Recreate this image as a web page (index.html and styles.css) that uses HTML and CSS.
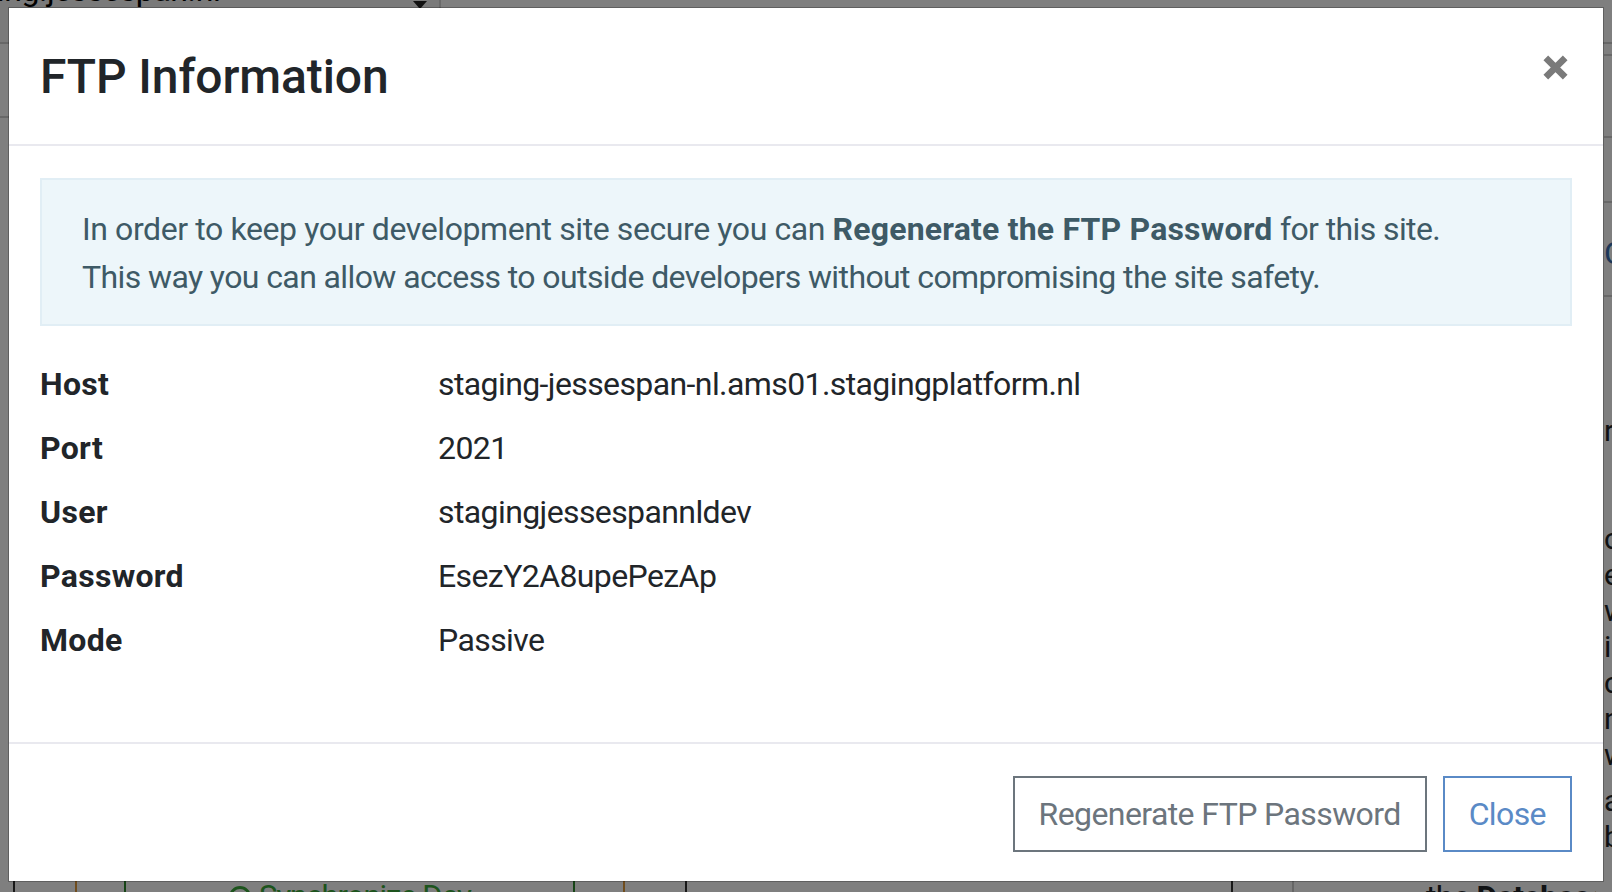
FILE: index.html
```html
<!DOCTYPE html>
<html lang="en">
<head>
<meta charset="utf-8">
<title>FTP Information</title>
<link rel="stylesheet" href="styles.css">
</head>
<body>
<div class="page">
  <div class="topbar">
    <div class="site-select"><span class="site-name">staging.jessespan.nl</span><span class="caret"></span></div>
    <div class="topbar-rest"></div>
  </div>
  <div class="page-main">
    <div class="page-left">
      <div class="left-top"></div>
      <div class="left-mid"></div>
      <div class="action-row">
        <div class="cell cell-a"></div>
        <div class="cell cell-b"></div>
        <div class="cell cell-c"><span class="sync"><span class="sync-icon"></span>Synchronize Dev</span></div>
        <div class="cell cell-d"></div>
        <div class="cell cell-e"></div>
        <div class="cell cell-f"></div>
        <div class="cell cell-g"></div>
        <div class="cell cell-h"><span class="db-text">the <b>Database</b> bu</span></div>
      </div>
    </div>
    <div class="page-right">
      <div class="pr-block pr-1"></div>
      <div class="pr-block pr-2"></div>
      <div class="pr-block pr-3"></div>
      <div class="pr-block pr-4"><span class="pr-link">Co</span></div>
      <div class="pr-text">
        <p class="pr-p1">re</p>
        <p class="pr-p2">co<br>ex<br>wi<br>in<br>co<br>n<br>wh</p>
        <p class="pr-p3">a<br>bu</p>
      </div>
    </div>
  </div>
</div>
<div class="backdrop"></div>
<div class="modal" role="dialog">
  <div class="modal-header">
    <h5 class="modal-title">FTP Information</h5>
    <button class="close" type="button" aria-label="Close">
      <svg width="25" height="25" viewBox="0 0 25 25"><path d="M2.8 2.8 L22.2 22.2 M22.2 2.8 L2.8 22.2" stroke="#7a7a7a" stroke-width="6.6" fill="none"/></svg>
    </button>
  </div>
  <div class="modal-body">
    <div class="alert"><span class="alert-lead">In order to keep your development site secure you can</span> <strong>Regenerate the FTP Password</strong> for this site.<br>This way you can allow access to outside developers without compromising the site safety.</div>
    <dl class="info">
      <dt>Host</dt><dd>staging-jessespan-nl.ams01.stagingplatform.nl</dd>
      <dt>Port</dt><dd>2021</dd>
      <dt>User</dt><dd>stagingjessespannldev</dd>
      <dt>Password</dt><dd>EsezY2A8upePezAp</dd>
      <dt>Mode</dt><dd>Passive</dd>
    </dl>
  </div>
  <div class="modal-footer">
    <button class="btn btn-secondary" type="button">Regenerate FTP Password</button>
    <button class="btn btn-primary" type="button">Close</button>
  </div>
</div>
</body>
</html>
```
FILE: styles.css
```css
* { box-sizing: border-box; }
html, body { margin: 0; padding: 0; }
body {
  width: 1612px;
  height: 892px;
  overflow: hidden;
  background: #fff;
  font-family: Roboto, "Liberation Sans", Arial, sans-serif;
  color: #212529;
}

/* underlying page */
.page {
  display: flex;
  flex-direction: column;
  height: 892px;
}
.topbar {
  display: flex;
  height: 44px;
  border-bottom: 2px solid #cfcfcf;
}
.site-select {
  width: 441px;
  display: flex;
  align-items: flex-start;
  justify-content: space-between;
  background: #f4f4f4;
  border-right: 2px solid #d4d4d4;
  overflow: hidden;
  padding-right: 12px;
}
.site-name {
  font-size: 32px;
  line-height: 32px;
  margin-top: -26px;
  margin-left: -64px;
  letter-spacing: -0.4px;
  white-space: nowrap;
  color: #000;
}
.caret {
  width: 0; height: 0;
  border-left: 7px solid transparent;
  border-right: 7px solid transparent;
  border-top: 8px solid #222;
  margin-top: 1px;
}
.topbar-rest { flex: 1; }
.page-main {
  flex: 1;
  display: flex;
}
.page-left {
  width: 1598px;
  display: flex;
  flex-direction: column;
}
.left-top {
  height: 74px;
  border-bottom: 2px solid #d0d0d0;
}
.left-mid { flex: 1; }
.action-row {
  height: 14px;
  display: flex;
  align-items: flex-start;
}
.cell { height: 14px; flex: none; }
.cell-a { margin-left: 13px; width: 62px; border-left: 2px solid #333; }
.cell-b { width: 49px; border-left: 2px solid #e09a3c; }
.cell-c { width: 449px; border-left: 2px solid #2f8a2f; overflow: hidden; }
.cell-d { width: 50px; border-left: 2px solid #2f8a2f; }
.cell-e { width: 62px; border-left: 2px solid #e09a3c; }
.cell-f { width: 546px; border-left: 2px solid #333; }
.cell-g { width: 61px; border-left: 2px solid #333; }
.cell-h { width: 304px; border-left: 2px solid #ccc; overflow: hidden; }
.sync {
  display: flex;
  align-items: center;
  gap: 8px;
  margin-left: 103px;
  margin-top: 3px;
  font-size: 31px;
  line-height: 32px;
  letter-spacing: -1px;
  color: #3aa83a;
  white-space: nowrap;
}
.sync-icon {
  width: 22px; height: 22px;
  border: 3px solid #3aa83a;
  border-radius: 50%;
}
.db-text {
  display: block;
  margin-left: 132px;
  margin-top: 3px;
  font-size: 32px;
  line-height: 32px;
  letter-spacing: -0.6px;
  white-space: nowrap;
  color: #212529;
}
.page-right {
  flex: 1;
  overflow: hidden;
  margin-top: -46px;
  padding-left: 6px;
}
.pr-block { border-bottom: 2px solid #d0d0d0; }
.pr-1 { height: 58px; }
.pr-2 { height: 82px; }
.pr-3 { height: 65px; }
.pr-4 { height: 94px; padding-top: 34px; }
.pr-link { font-size: 32px; line-height: 32px; color: #3b6fb0; }
.pr-text { font-size: 30px; line-height: 36px; color: #212529; }
.pr-text p { margin: 0; }
.pr-p1 { margin-top: 116px !important; }
.pr-p2 { margin-top: 72px !important; }
.pr-p3 { margin-top: 10px !important; }

.backdrop {
  position: fixed;
  inset: 0;
  background: rgba(0, 0, 0, 0.5);
}

/* modal */
.modal {
  position: fixed;
  top: 7px;
  left: 8px;
  width: 1596px;
  background: #fff;
  border: 1px solid rgba(0, 0, 0, 0.25);
  background-clip: padding-box;
  display: flex;
  flex-direction: column;
}
.modal-header {
  display: flex;
  justify-content: space-between;
  align-items: flex-start;
  padding: 33px 31px 31px;
  border-bottom: 2px solid #e9e9ef;
}
.modal-title {
  margin: 0;
  font-size: 48px;
  line-height: 72px;
  font-weight: 500;
  letter-spacing: -0.1px;
  color: #212529;
}
.close {
  border: 0;
  background: transparent;
  padding: 0;
  width: 25px;
  height: 25px;
  margin-top: 14px;
  margin-right: 4px;
  display: block;
}
.close svg { display: block; }

.modal-body {
  padding: 32px 31px;
}
.alert {
  background: #edf6fa;
  border: 2px solid #e1eef5;
  padding: 25px 40px 23px;
  font-size: 32px;
  line-height: 48px;
  letter-spacing: -0.6px;
  color: #3e5a66;
  margin-bottom: 34px;
}
.alert-lead { letter-spacing: -0.4px; }
.alert strong { font-weight: 700; letter-spacing: 0.2px; }
.info {
  display: grid;
  grid-template-columns: 398px 1fr;
  row-gap: 16px;
  margin: 0 0 46px;
  font-size: 32px;
  line-height: 48px;
  letter-spacing: -0.6px;
}
.info dt { font-weight: 700; color: #212529; letter-spacing: 0.3px; }
.info dd { margin: 0; color: #212529; }

.modal-footer {
  display: flex;
  justify-content: flex-end;
  gap: 16px;
  padding: 32px 31px 29px;
  border-top: 2px solid #e9e9ef;
}
.btn {
  font-family: inherit;
  font-size: 32px;
  line-height: 48px;
  letter-spacing: -0.6px;
  padding: 12px 24px;
  border-radius: 0;
  background: transparent;
  border: 2px solid;
}
.btn-secondary { color: #6c757d; border-color: #6c757d; }
.btn-primary { color: #5a8ac6; border-color: #5a8ac6; }
```
